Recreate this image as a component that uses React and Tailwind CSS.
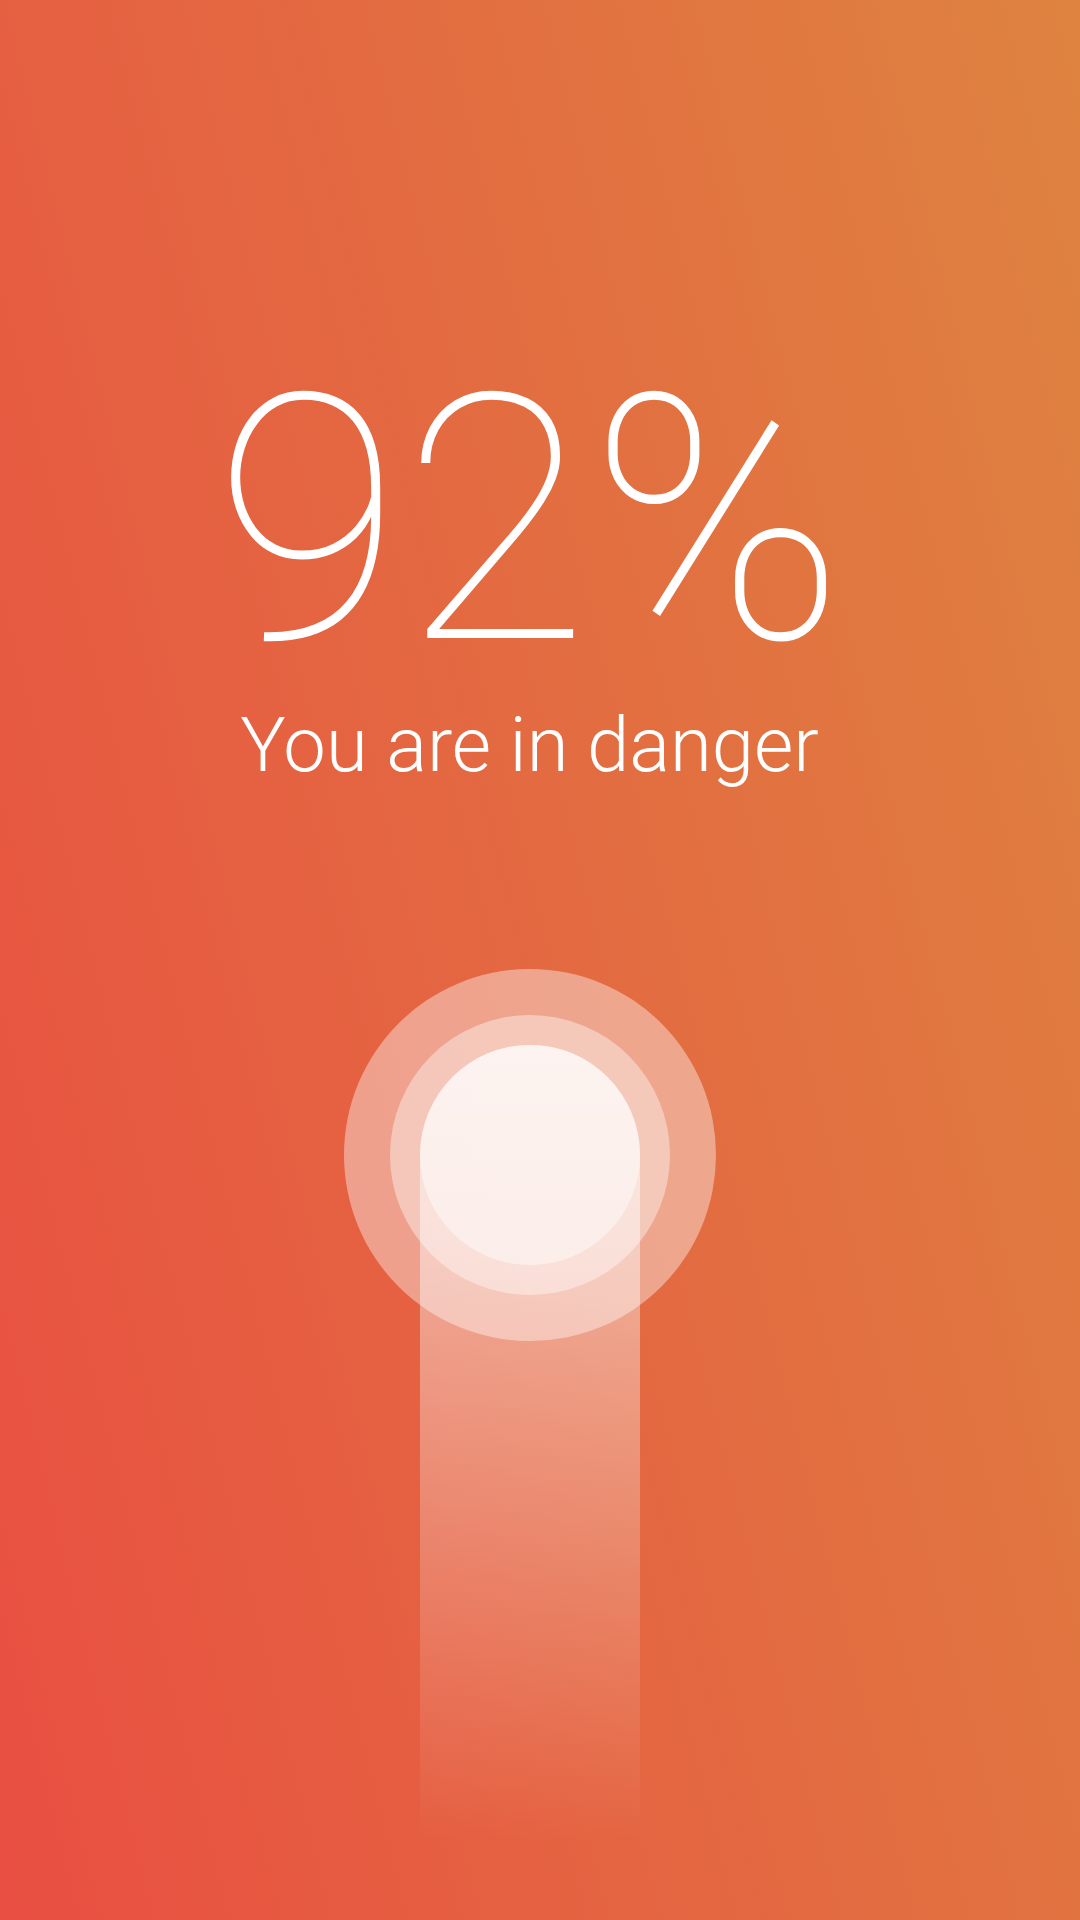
export default function App() {
  return (
    <div className="relative h-[1920px] w-[1080px] overflow-hidden bg-[linear-gradient(76deg,#e94f42,#de8340)] font-['Roboto','Liberation_Sans',sans-serif] text-white">
      <div className="flex h-full flex-col items-center pr-[21px]">
        {/* Percentage */}
        <div className="mt-[350px] text-[343px] font-thin leading-none">92%</div>
        <div className="mt-[14px] text-[76px] font-light leading-none">You are in danger</div>

        {/* Pulse rings */}
        <div className="mt-[186px] flex size-[372px] shrink-0 items-center justify-center rounded-full bg-white/40">
          <div className="flex size-[280px] items-center justify-center rounded-full bg-white/40">
            <div className="size-[220px] rounded-full bg-white/45" />
          </div>
        </div>

        {/* Level bar */}
        <div className="-mt-[296px] w-[220px] flex-1 rounded-t-full bg-[linear-gradient(to_bottom,rgba(255,255,255,0.6),rgba(255,255,255,0)_91%)]" />
      </div>
    </div>
  )
}
